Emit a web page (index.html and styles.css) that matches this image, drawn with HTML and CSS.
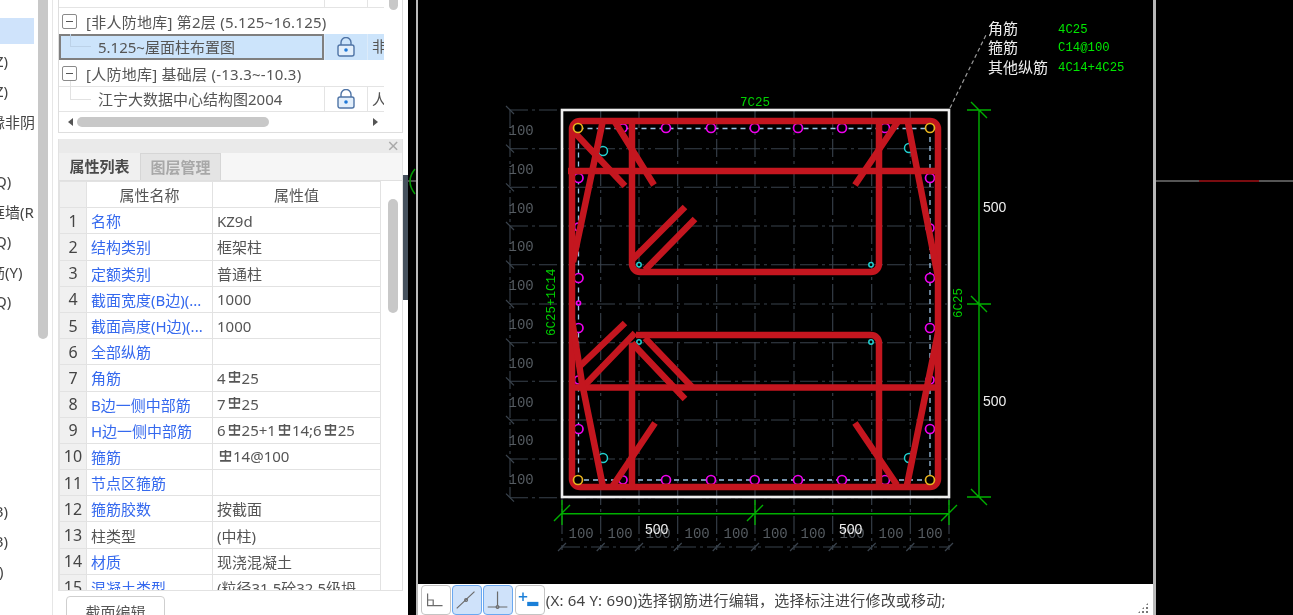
FILE: index.html
```html
<!DOCTYPE html>
<html lang="zh">
<head>
  <meta charset="UTF-8">
  <title>截面编辑</title>
  <link rel="stylesheet" href="styles.css">
</head>
<body>
<div class="app">

  <!-- left list, cut off by the window -->
  <div class="side">
    <div class="side-list">
      <div class="side-row active"></div>
      <div class="side-row"><span>Z)</span></div>
      <div class="side-row"><span>Z)</span></div>
      <div class="side-row far"><span>缘非阴</span></div>
      <div class="side-row"></div>
      <div class="side-row"><span>Q)</span></div>
      <div class="side-row far"><span>框墙(R</span></div>
      <div class="side-row"><span>Q)</span></div>
      <div class="side-row far"><span>筋(Y)</span></div>
      <div class="side-row"><span>Q)</span></div>
      <div class="side-row"></div>
      <div class="side-row"></div>
      <div class="side-row"></div>
      <div class="side-row"></div>
      <div class="side-row"></div>
      <div class="side-row"></div>
      <div class="side-row"><span>3)</span></div>
      <div class="side-row"><span>3)</span></div>
      <div class="side-row near"><span>)</span></div>
    </div>
    <div class="side-scroll"><div class="side-thumb"></div></div>
  </div>

  <div class="panels">
    <!-- drawing tree -->
    <div class="tree-panel">
      <div class="tree-body">
        <div class="tree-row tree-leaf tree-first"><div class="tree-name"></div><div class="tree-lock"></div><div class="tree-extra"></div></div>
        <div class="tree-row tree-head"><span class="minus"></span>[非人防地库] 第2层 (5.125~16.125)</div>
        <div class="tree-row tree-leaf selected">
          <div class="tree-name">5.125~屋面柱布置图</div>
          <div class="tree-lock"><svg class="lock" viewBox="0 0 18 20"><path d="M4 8V5.500a5 5 0 0 1 10 0V8"/><rect x="1" y="8" width="16" height="11" rx="2"/><circle cx="9" cy="13" r="1.800"/></svg></div>
          <div class="tree-extra">非</div>
        </div>
        <div class="tree-row tree-head"><span class="minus"></span>[人防地库] 基础层 (-13.3~-10.3)</div>
        <div class="tree-row tree-leaf">
          <div class="tree-name">江宁大数据中心结构图2004</div>
          <div class="tree-lock"><svg class="lock" viewBox="0 0 18 20"><path d="M4 8V5.500a5 5 0 0 1 10 0V8"/><rect x="1" y="8" width="16" height="11" rx="2"/><circle cx="9" cy="13" r="1.800"/></svg></div>
          <div class="tree-extra">人</div>
        </div>
        <div class="tree-hscroll">
          <span class="arrow-left"></span>
          <div class="tree-hthumb"></div>
          <span class="arrow-right"></span>
        </div>
      </div>
      <div class="tree-vthumb"></div>
    </div>

    <!-- properties -->
    <div class="prop-panel">
      <div class="prop-title"><span class="close">×</span></div>
      <div class="tabs">
        <div class="tab on">属性列表</div>
        <div class="tab">图层管理</div>
      </div>
      <div class="prop-body">
        <table class="prop-table">
          <colgroup><col class="c-num"><col class="c-name"><col class="c-val"></colgroup>
          <tr><th></th><th class="h">属性名称</th><th class="h">属性值</th></tr>
          <tr><th>1</th><td class="link">名称</td><td>KZ9d</td></tr>
          <tr><th>2</th><td class="link">结构类别</td><td>框架柱</td></tr>
          <tr><th>3</th><td class="link">定额类别</td><td>普通柱</td></tr>
          <tr><th>4</th><td class="link">截面宽度(B边)(...</td><td>1000</td></tr>
          <tr><th>5</th><td class="link">截面高度(H边)(...</td><td>1000</td></tr>
          <tr><th>6</th><td class="link">全部纵筋</td><td></td></tr>
          <tr><th>7</th><td class="link">角筋</td><td>4<svg class="rb" viewBox="0 0 12 11"><use href="#rebar"/></svg>25</td></tr>
          <tr><th>8</th><td class="link">B边一侧中部筋</td><td>7<svg class="rb" viewBox="0 0 12 11"><use href="#rebar"/></svg>25</td></tr>
          <tr><th>9</th><td class="link">H边一侧中部筋</td><td>6<svg class="rb" viewBox="0 0 12 11"><use href="#rebar"/></svg>25+1<svg class="rb" viewBox="0 0 12 11"><use href="#rebar"/></svg>14;6<svg class="rb" viewBox="0 0 12 11"><use href="#rebar"/></svg>25</td></tr>
          <tr><th>10</th><td class="link">箍筋</td><td><svg class="rb" viewBox="0 0 12 11"><use href="#rebar"/></svg>14@100</td></tr>
          <tr><th>11</th><td class="link">节点区箍筋</td><td></td></tr>
          <tr><th>12</th><td class="link">箍筋胶数</td><td>按截面</td></tr>
          <tr><th>13</th><td>柱类型</td><td>(中柱)</td></tr>
          <tr><th>14</th><td class="link">材质</td><td>现浇混凝土</td></tr>
          <tr><th>15</th><td class="link">混凝土类型</td><td>(粒径31.5砼32.5级坍</td></tr>
        </table>
        <div class="prop-thumb"></div>
      </div>
    </div>
    <button class="edit-btn">截面编辑</button>
    <div class="splitter"></div>
  </div>

  <!-- section drawing -->
  <div class="work">
    <svg class="section" viewBox="408 0 745 584">
      <defs>
        <g id="rebar"><path d="M1.500 1.500h9v4h-9zM6 0v10M1 10h10" fill="none" stroke="#555" stroke-width="1.400"/></g>
      </defs>

      <path class="edge" d="M417 0V584"/>
      <path class="edge-stub" d="M408 181H416"/>
      <path class="edge-arc" d="M415 169Q405 181 415 194"/>

      <path class="guide" d="M510 110H947M510 148.700H947M510 187.300H947M510 226H947M510 264.700H947M510 304H947M510 342.700H947M510 381.300H947M510 420H947M510 459H947M510 497.700H947"/>
      <path class="guide" d="M510 110V497M562 110V550M600.700 110V550M639 110V550M677.700 110V550M716.700 110V550M755 110V550M794 110V550M832.700 110V550M871.700 110V550M910.300 110V550M949 110V550M562 547H949"/>
      <path class="tick" d="M506 106l8 8M506 144.700l8 8M506 183.300l8 8M506 222l8 8M506 260.700l8 8M506 300l8 8M506 338.700l8 8M506 377.300l8 8M506 416l8 8M506 455l8 8M506 493.700l8 8"/>
      <path class="tick" d="M558 551l8-8M596.700 551l8-8M635 551l8-8M673.700 551l8-8M712.700 551l8-8M751 551l8-8M790 551l8-8M828.700 551l8-8M867.700 551l8-8M906.300 551l8-8M945 551l8-8"/>

      <g class="dim-grey">
        <text x="508.500" y="134.500">100</text><text x="508.500" y="173.500">100</text><text x="508.500" y="212.500">100</text><text x="508.500" y="250.500">100</text><text x="508.500" y="289.500">100</text>
        <text x="508.500" y="328.500">100</text><text x="508.500" y="367.500">100</text><text x="508.500" y="406.500">100</text><text x="508.500" y="444.500">100</text><text x="508.500" y="483.500">100</text>
        <text x="568.500" y="537.500">100</text><text x="607.500" y="537.500">100</text><text x="645.500" y="537.500">100</text><text x="684.500" y="537.500">100</text><text x="723.500" y="537.500">100</text>
        <text x="762.500" y="537.500">100</text><text x="800.500" y="537.500">100</text><text x="839.500" y="537.500">100</text><text x="878.500" y="537.500">100</text><text x="917.500" y="537.500">100</text>
      </g>

      <rect class="frame" x="562" y="110" width="387" height="387"/>
      <rect class="inner" x="578.500" y="128.500" width="351.500" height="351.500"/>

      <g class="bar-c">
        <circle cx="623" cy="128" r="4"/><circle cx="666" cy="128" r="4.500"/><circle cx="711" cy="128" r="4.500"/><circle cx="754.700" cy="128" r="4.500"/><circle cx="798" cy="128" r="4.500"/><circle cx="842" cy="128" r="4.500"/><circle cx="885" cy="128" r="4.500"/>
        <circle cx="623" cy="480" r="4"/><circle cx="666" cy="480" r="4.500"/><circle cx="711" cy="480" r="4.500"/><circle cx="754.700" cy="480" r="4.500"/><circle cx="798" cy="480" r="4.500"/><circle cx="842" cy="480" r="4.500"/><circle cx="885" cy="480" r="4.500"/>
        <circle cx="578.500" cy="178" r="4.500"/><circle cx="578.500" cy="227" r="4"/><circle cx="578.500" cy="278" r="4.500"/><circle cx="578.500" cy="303" r="2"/><circle cx="578.500" cy="328" r="4.500"/><circle cx="578.500" cy="380" r="4"/><circle cx="578.500" cy="429" r="4.500"/>
        <circle cx="930" cy="178" r="4.500"/><circle cx="930" cy="228" r="4"/><circle cx="930" cy="278" r="4.500"/><circle cx="930" cy="328" r="4.500"/><circle cx="930" cy="380" r="4"/><circle cx="930" cy="429" r="4.500"/>
      </g>
      <g class="bar-s">
        <circle cx="639" cy="264.700" r="2.200"/><circle cx="871" cy="264.700" r="2.200"/><circle cx="639" cy="342" r="2.200"/><circle cx="871" cy="342" r="2.200"/>
        <circle cx="603" cy="151" r="4.500"/><circle cx="909" cy="148" r="4.500"/><circle cx="603" cy="458" r="4.500"/><circle cx="909" cy="458" r="4.500"/>
      </g>

      <!-- stirrups -->
      <g class="steel">
        <rect x="572" y="121" width="366" height="366" rx="8"/>
        <path d="M568 171H940M572 387.500H940"/>
        <path d="M632 118V264a8 8 0 0 0 8 8H871a8 8 0 0 0 8-8V118"/>
        <path d="M636 335H871a8 8 0 0 1 8 8V490M632 343V490"/>
        <path d="M575 133L625 186M615 122L654 185M603 120L573 262"/>
        <path d="M632 260L685 207M645 270L695 219"/>
        <path d="M899 120L855 185M908 123L938 277"/>
        <path d="M625 323L578 368M635 333L582 388M632 343L685 399M645 338L693 388"/>
        <path d="M572 320L582 383L603 487M655 423L612 487"/>
        <path d="M855 423L897 485M938 333L907 485"/>
      </g>

      <g class="bar-k">
        <circle cx="578" cy="128" r="4.500"/><circle cx="930" cy="128" r="4.500"/><circle cx="578" cy="480" r="4.500"/><circle cx="930" cy="480" r="4.500"/>
      </g>

      <!-- dimensions -->
      <path class="dim" d="M562 513.700H949M562 500V525M755 500V525M949 500V525M554 521l16-16M747 521l16-16M941 521l16-16"/>
      <path class="dim" d="M979 110V497M967 110H991M967 304H991M967 497H991M971 102l16 16M971 296l16 16M971 489l16 16"/>
      <path class="leader" d="M950 108L987 33"/>

      <text class="dim-w" x="645" y="534">500</text>
      <text class="dim-w" x="839" y="534">500</text>
      <text class="dim-w" x="983" y="212">500</text>
      <text class="dim-w" x="983" y="406">500</text>
      <text class="dim-g" x="740" y="106">7C25</text>
      <text class="dim-g" transform="translate(555 336) rotate(-90)">6C25+1C14</text>
      <text class="dim-g" transform="translate(962 318) rotate(-90)">6C25</text>

      <text class="note" x="988" y="34">角筋</text>
      <text class="note" x="988" y="53">箍筋</text>
      <text class="note" x="988" y="73">其他纵筋</text>
      <text class="note-g" x="1058" y="33">4C25</text>
      <text class="note-g" x="1058" y="51">C14@100</text>
      <text class="note-g" x="1058" y="71">4C14+4C25</text>
    </svg>

    <div class="status">
      <button class="tool"><svg viewBox="0 0 30 30"><path d="M6 8V21H22M6 15H12V21"/></svg></button>
      <button class="tool on"><svg viewBox="0 0 30 30"><path d="M4 24L23 6"/><circle cx="14" cy="15" r="1.500"/></svg></button>
      <button class="tool on"><svg viewBox="0 0 30 30"><path d="M14.500 6V21M4 22.500H25"/><circle cx="14.500" cy="22.500" r="1.500"/></svg></button>
      <button class="tool"><svg viewBox="0 0 30 30"><path class="ico-plus" d="M7.500 7V16M3 11.500H12"/><rect class="ico-bar" x="12" y="17" width="12" height="4.500"/></svg></button>
      <span class="status-text">(X: 64 Y: 690)选择钢筋进行编辑，选择标注进行修改或移动;</span>
      <span class="grip"></span>
    </div>
  </div>

  <div class="rest"><div class="rest-line"></div></div>
</div>
</body>
</html>
```

FILE: styles.css
```css
html, body {
  margin: 0;
  padding: 0;
  height: 100%;
  background: #000;
  overflow: hidden;
}

.app {
  display: flex;
  width: 1293px;
  height: 615px;
  overflow: hidden;
  font-family: "Noto Sans", "Noto Sans CJK SC", sans-serif;
  font-size: 15px;
  color: #444;
  filter: blur(0.5px);
}

/* left list */
.side {
  display: flex;
  width: 53px;
  flex: none;
  background: #fff;
  border-right: 1px solid #e6e6e6;
  box-sizing: border-box;
}

.side-list {
  width: 34px;
  padding-top: 16px;
  margin-right: 4px;
  overflow: hidden;
}

.side-row {
  display: flex;
  align-items: center;
  height: 30px;
  white-space: nowrap;
}

.side-row span { margin-left: -5px; }
.side-row.far span { margin-left: -10px; }
.side-row.near span { margin-left: -1px; }

.side-row.active {
  height: 26px;
  margin: 2px 0;
  background: #cfe3fb;
}

.side-scroll { width: 10px; }

.side-thumb {
  height: 339px;
  background: #c8c8c8;
  border-radius: 0 0 5px 5px;
}

/* middle column */
.panels {
  position: relative;
  width: 355px;
  flex: none;
  box-sizing: border-box;
  padding: 0 5px;
  background: #fff;
}

.splitter {
  position: absolute;
  right: 0;
  top: 175px;
  width: 5px;
  height: 125px;
  background: #46525e;
}

.tree-panel {
  position: relative;
  height: 133px;
  box-sizing: border-box;
  border: 1px solid #dedede;
  border-top: 0;
}

.tree-body { width: 325px; }

.tree-row {
  height: 26px;
  box-sizing: border-box;
}

.tree-first { height: 8px; overflow: hidden; }

.tree-head {
  display: flex;
  align-items: center;
  color: #555;
  padding-left: 3px;
  letter-spacing: 0.25px;
  white-space: nowrap;
}

.minus {
  position: relative;
  width: 15px;
  height: 15px;
  margin-right: 9px;
  box-sizing: border-box;
  border: 1px solid #8a8a8a;
  border-radius: 2px;
}

.minus::after {
  content: "";
  position: absolute;
  left: 3px;
  right: 3px;
  top: 6px;
  height: 1px;
  background: #555;
}

.tree-leaf {
  display: flex;
  border-bottom: 1px solid #e4e4e4;
  border-top: 1px solid #e4e4e4;
}

.tree-first { border-top: 0; }

.tree-name {
  position: relative;
  width: 265px;
  box-sizing: border-box;
  padding-left: 39px;
  line-height: 24px;
  color: #555;
}

.tree-name::before {
  content: "";
  position: absolute;
  left: 11px;
  top: -6px;
  width: 20px;
  height: 18px;
  border-left: 1px solid #e2e2e2;
  border-bottom: 1px solid #e2e2e2;
}

.tree-first .tree-name::before { display: none; }

.tree-lock {
  display: flex;
  align-items: center;
  justify-content: center;
  width: 44px;
  border-left: 1px solid #e4e4e4;
  border-right: 1px solid #e4e4e4;
  box-sizing: border-box;
}

.tree-extra {
  width: 16px;
  padding-left: 4px;
  line-height: 24px;
  overflow: hidden;
  box-sizing: border-box;
  white-space: nowrap;
  color: #555;
}

.selected { background: #cce4fb; border: 0; }

.selected .tree-name {
  border: 2px solid #7f7f7f;
  line-height: 22px;
  padding-left: 37px;
}

.selected .tree-name::before { left: 9px; top: -2px; height: 12px; border-color: #bcd2e8; }
.selected .tree-lock { border-color: #dcebfa; }

.lock {
  width: 18px;
  height: 20px;
  fill: none;
  stroke: #4f74a6;
  stroke-width: 1.400;
}

.lock rect { fill: #e3effb; }
.lock circle { fill: #1e78d8; stroke: none; }

.tree-hscroll {
  display: flex;
  align-items: center;
  height: 18px;
  margin-top: 1px;
  padding-left: 9px;
}

.arrow-left, .arrow-right {
  width: 0;
  height: 0;
  border-top: 4px solid transparent;
  border-bottom: 4px solid transparent;
}

.arrow-left { border-right: 5px solid #555; margin-right: 4px; }
.arrow-right { border-left: 5px solid #555; margin-left: 104px; }

.tree-hthumb {
  width: 192px;
  height: 10px;
  background: #c8c8c8;
  border-radius: 5px;
}

/* overlays the tree's right edge */
.tree-vthumb {
  position: absolute;
  top: 0;
  left: 330px;
  width: 9px;
  height: 10px;
  background: #c8c8c8;
  border-radius: 0 0 5px 5px;
}

.prop-panel {
  height: 452px;
  margin-top: 6px;
  box-sizing: border-box;
  border: 1px solid #e2e2e2;
  border-top: 0;
  overflow: hidden;
}

.prop-title {
  display: flex;
  justify-content: flex-end;
  align-items: center;
  height: 14px;
  background: #eaeaea;
  padding-right: 3px;
}

.close { color: #aaa; font-size: 20px; line-height: 14px; }

.tabs {
  display: flex;
  height: 28px;
  background: #f6f6f6;
  box-sizing: border-box;
  border-bottom: 1px solid #e0e0e0;
}

.tab {
  width: 81px;
  text-align: center;
  line-height: 27px;
  color: #a8a8a8;
  font-weight: 700;
  background: #e4e4e4;
  border: 1px solid #d6d6d6;
  border-bottom: 0;
  box-sizing: border-box;
}

.tab.on {
  color: #4a4a4a;
  background: #f0f0f0;
  border: 0;
}

.prop-body { position: relative; }

.prop-table {
  width: 322px;
  table-layout: fixed;
  border-collapse: collapse;
}

.c-num { width: 27px; }
.c-name { width: 126px; }

.prop-table th, .prop-table td {
  height: 26.200px;
  padding: 0 4px;
  box-sizing: border-box;
  border: 1px solid #e2e2e2;
  font-weight: 400;
  white-space: nowrap;
  overflow: hidden;
}

.prop-table th { background: #f0f0f0; text-align: center; font-size: 16px; padding: 0; }
.prop-table th.h { background: #fff; font-size: 15px; color: #555; }
.prop-table td { color: #555; }
.prop-table td.link { color: #3569ee; }

.rb {
  width: 13px;
  height: 12px;
  margin: 0 1px 5px 2px;
  vertical-align: middle;
}

.prop-thumb {
  position: absolute;
  top: 18px;
  left: 329px;
  width: 10px;
  height: 114px;
  background: #c8c8c8;
  border-radius: 5px;
}

.edit-btn {
  display: block;
  width: 99px;
  height: 30px;
  margin: 5px 0 0 8px;
  padding: 0;
  background: #fff;
  border: 1px solid #cfcfcf;
  border-radius: 4px;
  font: inherit;
  color: #555;
}

/* drawing */
.work {
  width: 745px;
  flex: none;
  background: #000;
}

.section {
  display: block;
  width: 745px;
  height: 584px;
  font-family: "Liberation Mono", monospace;
}

.edge { fill: none; stroke: #bbb; stroke-width: 2; }
.edge-stub { fill: none; stroke: #666; stroke-width: 1.500; }
.edge-arc { fill: none; stroke: #009a00; stroke-width: 1.500; }

.guide {
  fill: none;
  stroke: #39424c;
  stroke-width: 1.100;
  stroke-dasharray: 18 4 3 4;
}

.tick { fill: none; stroke: #3a434d; stroke-width: 1.200; }

.dim-grey text { fill: #565c62; font-size: 14px; }

.frame { fill: none; stroke: #eee; stroke-width: 2.600; }

.inner {
  fill: none;
  stroke: #9cc3e6;
  stroke-width: 1.300;
  stroke-dasharray: 5 4;
}

.bar-c circle { fill: #000; stroke: #ee00ee; stroke-width: 1.700; }
.bar-s circle { fill: #000; stroke: #22d0d0; stroke-width: 1.500; }
.bar-k circle { fill: #000; stroke: #e8b41e; stroke-width: 1.700; }

.steel path, .steel rect {
  fill: none;
  stroke: #c4161f;
  stroke-width: 6.500;
}

.dim { fill: none; stroke: #00b000; stroke-width: 1.400; }
.leader { fill: none; stroke: #999; stroke-width: 1.200; stroke-dasharray: 4 3; }

.dim-w {
  fill: #eee;
  font-family: "Liberation Sans", sans-serif;
  font-size: 14px;
}

.dim-g { fill: #00d000; font-size: 12.500px; }

.note {
  fill: #eee;
  font-family: "Noto Sans CJK SC", sans-serif;
  font-size: 15px;
}

.note-g { fill: #00e800; font-size: 12.300px; }

.status {
  display: flex;
  align-items: center;
  position: relative;
  height: 31px;
  margin-left: 8px;
  padding-left: 3px;
  box-sizing: border-box;
  background: #fff;
  border-left: 2px solid #bbb;
}

.tool {
  width: 30px;
  height: 30px;
  margin: 1px 1.200px 0 0;
  padding: 0;
  background: #fff;
  border: 1px solid #c4c4c4;
  border-radius: 4px;
  flex: none;
}

.tool svg {
  display: block;
  width: 28px;
  height: 28px;
  fill: none;
  stroke: #6b6b6b;
  stroke-width: 1.300;
}

.tool.on { background: #cfe2fa; border-color: #6aa8f0; }

.ico-plus { stroke: #1a7fd8; stroke-width: 1.600; }
.ico-bar { fill: #1a7fd8; stroke: none; }

.status-text { white-space: nowrap; color: #444; letter-spacing: 0.2px; }

.grip {
  position: absolute;
  right: 4px;
  bottom: 1px;
  width: 12px;
  height: 12px;
  background: radial-gradient(circle, #777 1.200px, transparent 1.400px) 0 0 / 4px 4px;
  clip-path: polygon(100% 0, 100% 100%, 0 100%);
}

.rest {
  flex: 1;
  border-left: 3px solid #b8b8b8;
  box-sizing: border-box;
  padding-top: 180px;
}

.rest-line {
  height: 2px;
  background: linear-gradient(to right, #555 43px, #7a0c10 43px, #7a0c10 103px, #555 103px);
}
```
